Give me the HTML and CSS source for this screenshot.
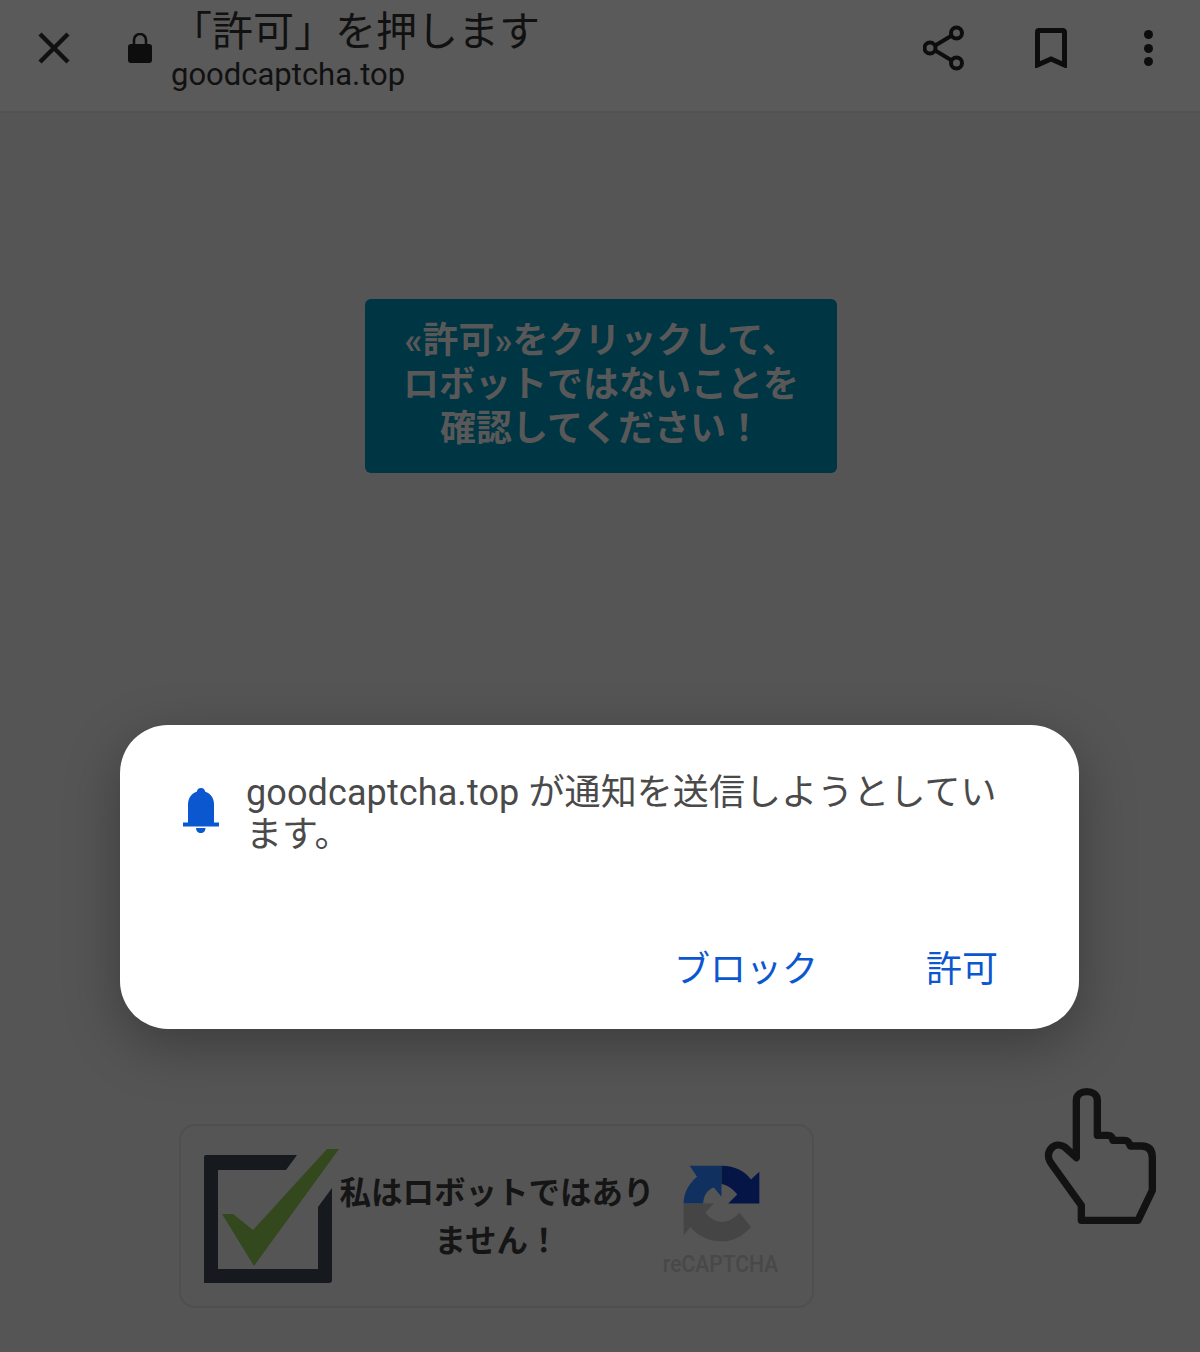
FILE: index.html
```html
<!DOCTYPE html>
<html lang="ja">
<head>
    <meta charset="UTF-8">
    <meta name="viewport" content="width=device-width, initial-scale=1.0">
    <title>「許可」を押します</title>
    <link rel="stylesheet" href="styles.css">
</head>
<body>
    <header class="toolbar">
        <svg class="icon-close" viewBox="0 0 32 32"><path d="M2 2 30 30M30 2 2 30"/></svg>
        <svg class="icon-lock" viewBox="0 0 24 30"><path class="lock-body" d="M3 11h18a3 3 0 0 1 3 3v13a3 3 0 0 1-3 3H3a3 3 0 0 1-3-3V14a3 3 0 0 1 3-3z"/><path class="lock-loop" d="M6 12V7a6 6 0 0 1 12 0v5"/></svg>
        <div class="title-block">
            <div class="page-title">「許可」を押します</div>
            <div class="page-url">goodcaptcha.top</div>
        </div>
        <div class="toolbar-actions">
            <svg class="icon-share" viewBox="0 0 42 46"><path d="M33 8 8 23l25 15"/><circle cx="33.500" cy="8" r="5.500"/><circle cx="7" cy="23" r="5.500"/><circle cx="33.500" cy="38" r="5.500"/></svg>
            <svg class="icon-bookmark" viewBox="0 0 32 40"><path d="M2.500 37V4a1.500 1.500 0 0 1 1.500-1.500h24a1.500 1.500 0 0 1 1.500 1.500v33L16 31z"/></svg>
            <div class="icon-more"><span></span><span></span><span></span></div>
        </div>
    </header>

    <main class="page">
        <div class="banner">«許可»をクリックして、<br>ロボットではないことを<br>確認してください！</div>

        <div class="captcha">
            <svg class="captcha-check" viewBox="0 0 135 135">
                <path class="check-box" d="M0 8a2 2 0 0 1 2-2H93L82 21H14V120H114V58L128 39V131a3 3 0 0 1-3 3H0z"/>
                <path class="check-mark" d="M123 0H135L50 117 18 65H29L49 81z"/>
            </svg>
            <div class="captcha-label">私はロボットではあり<br>ません！</div>
            <div class="captcha-brand">
                <svg class="recaptcha-logo" viewBox="130 140 230 230">
                    <path class="rc-light" d="M150 142H245V235L222 207C205 212 192 228 190 255H132C132 222 148 195 172 175z"/>
                    <path class="rc-dark" d="M245 142C285 142 315 158 333 183L358 160V255H265L292 228C280 212 262 200 245 197z"/>
                    <path class="rc-grey" d="M132 255H222L197 282C210 300 228 310 245 310 265 310 285 300 298 282L333 325C310 352 280 368 245 368 205 368 172 350 152 325L132 350z"/>
                </svg>
                <div class="recaptcha-name">reCAPTCHA</div>
            </div>
        </div>
    </main>

    <svg class="hand" viewBox="40 20 345 420"><path d="M140 232V60C140 25 203 25 203 60V165H235Q247 165 250 180H285Q297 180 302 197H335Q368 197 368 232V330L325 420H155V375L65 250C40 215 75 180 105 200z"/></svg>

    <div class="dialog">
        <div class="dialog-body">
            <svg class="icon-bell" viewBox="0 0 36 46"><path d="M18 0c2.500 0 4 1.700 4 3.500 6 2 9 7 9 13v18h5v4H0v-4h5v-18c0-6 3-11 9-13C14 1.700 15.500 0 18 0z"/><path d="M13 40h9.500c0 3-2 5-4.700 5s-4.800-2-4.800-5z"/></svg>
            <p class="dialog-text">goodcaptcha.top が通知を送信しようとしています。</p>
        </div>
        <div class="dialog-actions">
            <span class="dialog-btn">ブロック</span>
            <span class="dialog-btn">許可</span>
        </div>
    </div>
</body>
</html>
```

FILE: styles.css
```css
/* Page */
html, body {
    height: 100%;
}

body {
    margin: 0;
    position: relative;
    overflow: hidden;
    background: #555;
    font-family: Roboto, "Noto Sans CJK JP", sans-serif;
    color: #0d0d0d;
}

/* Toolbar */
.toolbar {
    height: 113px;
    box-sizing: border-box;
    display: flex;
    align-items: center;
    background: #5a5a5a;
    border-bottom: 2px solid #525252;
    padding-left: 38px;
}

.icon-close {
    width: 32px;
    height: 32px;
    margin-top: -15px;
    fill: none;
    stroke: #111;
    stroke-width: 4.500;
}

.icon-lock {
    width: 24px;
    height: 30px;
    margin: -15px 0 0 58px;
}

.lock-body {
    fill: #0d0d0d;
}

.lock-loop {
    fill: none;
    stroke: #0d0d0d;
    stroke-width: 2.500;
}

.title-block {
    margin: -8px 0 0 19px;
}

.page-title {
    font-size: 41px;
    line-height: 45px;
    color: #111;
}

.page-url {
    font-size: 31px;
    line-height: 39px;
    color: #111;
}

.toolbar-actions {
    margin-left: auto;
    display: flex;
    align-items: center;
    margin-top: -15px;
    padding-right: 47px;
}

.icon-share {
    width: 42px;
    height: 46px;
    fill: none;
    stroke: #0d0d0d;
    stroke-width: 4;
}

.icon-share circle {
    fill: #5a5a5a;
}

.icon-bookmark {
    width: 32px;
    height: 40px;
    margin-left: 70px;
    fill: none;
    stroke: #0d0d0d;
    stroke-width: 5;
}

.icon-more {
    margin-left: 77px;
    display: flex;
    flex-direction: column;
    gap: 4.500px;
}

.icon-more span {
    width: 9px;
    height: 9px;
    border-radius: 50%;
    background: #0d0d0d;
}

/* Page content behind the dialog */
.page {
    display: flex;
    flex-direction: column;
    align-items: flex-start;
    padding: 186px 0 0 179px;
}

.banner {
    margin-left: 186px;
    width: 472px;
    height: 174px;
    box-sizing: border-box;
    padding-top: 20px;
    background: #003544;
    border-radius: 6px;
    color: #585858;
    font-size: 36px;
    font-weight: 700;
    line-height: 44px;
    text-align: center;
}

.captcha {
    margin-top: 651px;
    width: 635px;
    height: 184px;
    box-sizing: border-box;
    border: 2px solid #4f4f4f;
    border-radius: 16px;
    display: flex;
    align-items: center;
    padding-left: 23px;
}

.captcha-check {
    width: 135px;
    height: 135px;
    flex: none;
    overflow: visible;
    margin-top: 1px;
}

.check-box {
    fill: #16191d;
}

.check-mark {
    fill: #33491d;
}

.captcha-label {
    margin-left: -2px;
    width: 320px;
    flex: none;
    font-size: 31.500px;
    font-weight: 700;
    line-height: 48px;
    text-align: center;
    color: #151515;
    margin-top: 3px;
}

.captcha-brand {
    margin-left: 2px;
    display: flex;
    flex-direction: column;
    align-items: center;
    width: 124px;
    flex: none;
}

.recaptcha-logo {
    width: 77px;
    height: 77px;
    margin-top: 12px;
}

.rc-light {
    fill: #10305f;
}

.rc-dark {
    fill: #051545;
}

.rc-grey {
    fill: #454545;
}

.recaptcha-name {
    margin-top: 7px;
    font-size: 24px;
    line-height: 30px;
    font-weight: 500;
    color: #484848;
    white-space: nowrap;
    transform: scaleX(0.88);
}

/* Hand pointer */
.hand {
    position: absolute;
    left: 1043px;
    top: 1087px;
    width: 115px;
    height: 140px;
    fill: none;
    stroke: #121212;
    stroke-width: 22;
    stroke-linejoin: round;
}

/* Permission dialog */
.dialog {
    position: absolute;
    left: 120px;
    top: 725px;
    width: 959px;
    height: 304px;
    box-sizing: border-box;
    padding: 47px 82px 0 63px;
    background: #fff;
    border-radius: 48px;
    box-shadow: 0 16px 56px rgba(0, 0, 0, 0.3);
}

.dialog-body {
    display: flex;
    align-items: flex-start;
}

.icon-bell {
    width: 36px;
    height: 46px;
    flex: none;
    margin-top: 16px;
    fill: #0b57d0;
}

.dialog-text {
    margin: 0 0 0 27px;
    font-size: 36px;
    line-height: 42px;
    letter-spacing: 0.1px;
    color: #4a4a4a;
}

.dialog-actions {
    position: absolute;
    right: 81px;
    top: 222px;
    display: flex;
    gap: 108px;
}

.dialog-btn {
    font-size: 36px;
    line-height: 46px;
    color: #0b57d0;
}
```
